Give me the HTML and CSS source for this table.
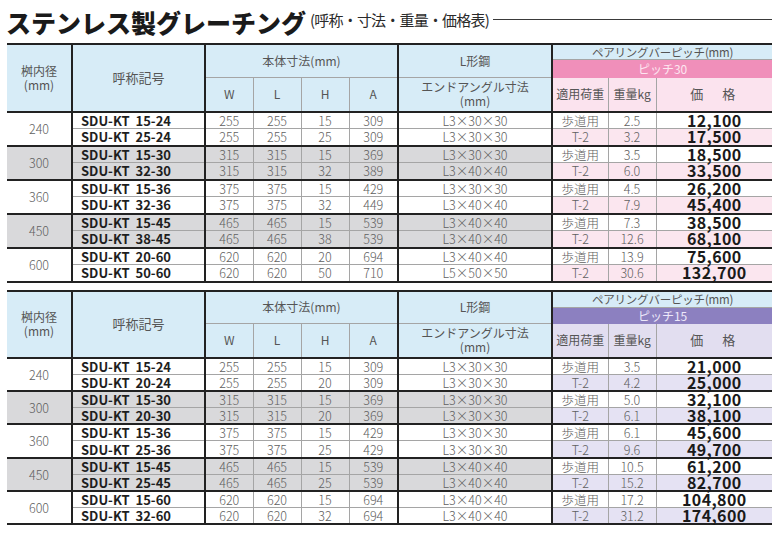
FILE: index.html
```html
<!DOCTYPE html>
<html lang="ja">
<head>
<meta charset="utf-8">
<link rel="stylesheet" href="styles.css">
</head>
<body>
<div class="page">
  <div class="title-row">
    <h1 class="title">ステンレス製グレーチング</h1>
    <span class="subtitle">(呼称・寸法・重量・価格表)</span>
    <span class="rule"></span>
  </div>

  <table class="tbl pink">
    <colgroup>
      <col class="w-c1"><col class="w-c2"><col class="w-d"><col class="w-d"><col class="w-d"><col class="w-a"><col class="w-l"><col class="w-ld"><col class="w-wt"><col class="w-pr">
    </colgroup>
    <thead>
      <tr class="h1">
        <th rowspan="3" class="hd thickr">桝内径<br>(mm)</th>
        <th rowspan="3" class="hd thickr name-h">呼称記号</th>
        <th rowspan="2" colspan="4" class="hd thickr">本体寸法(mm)</th>
        <th rowspan="2" class="hd thickr">L形鋼</th>
        <th colspan="3" class="hd pitch-h">ペアリングバーピッチ(mm)</th>
      </tr>
      <tr class="h2">
        <th colspan="3" class="band">ピッチ30</th>
      </tr>
      <tr class="h3">
        <th class="hd">W</th><th class="hd">L</th><th class="hd">H</th><th class="hd thickr">A</th>
        <th class="hd thickr">エンドアングル寸法<br>(mm)</th>
        <th class="sub">適用荷重</th><th class="sub">重量kg</th><th class="sub price-h">価　格</th>
      </tr>
    </thead>
    <tbody>
      <tr class="gtop"><td rowspan="2" class="thickr">240</td><td class="name thickr">SDU-KT&nbsp; 15-24</td><td>255</td><td>255</td><td>15</td><td class="thickr">309</td><td class="thickr">L3×30×30</td><td>歩道用</td><td>2.5</td><td class="price">12,100</td></tr>
      <tr class="t2"><td class="name thickr">SDU-KT&nbsp; 25-24</td><td>255</td><td>255</td><td>25</td><td class="thickr">309</td><td class="thickr">L3×30×30</td><td class="tint">T-2</td><td class="tint">3.2</td><td class="tint price">17,500</td></tr>
      <tr class="gtop gray"><td rowspan="2" class="thickr">300</td><td class="name thickr">SDU-KT&nbsp; 15-30</td><td>315</td><td>315</td><td>15</td><td class="thickr">369</td><td class="thickr">L3×30×30</td><td class="w">歩道用</td><td class="w">3.5</td><td class="w price">18,500</td></tr>
      <tr class="t2 gray"><td class="name thickr">SDU-KT&nbsp; 32-30</td><td>315</td><td>315</td><td>32</td><td class="thickr">389</td><td class="thickr">L3×40×40</td><td class="tint">T-2</td><td class="tint">6.0</td><td class="tint price">33,500</td></tr>
      <tr class="gtop"><td rowspan="2" class="thickr">360</td><td class="name thickr">SDU-KT&nbsp; 15-36</td><td>375</td><td>375</td><td>15</td><td class="thickr">429</td><td class="thickr">L3×30×30</td><td>歩道用</td><td>4.5</td><td class="price">26,200</td></tr>
      <tr class="t2"><td class="name thickr">SDU-KT&nbsp; 32-36</td><td>375</td><td>375</td><td>32</td><td class="thickr">449</td><td class="thickr">L3×40×40</td><td class="tint">T-2</td><td class="tint">7.9</td><td class="tint price">45,400</td></tr>
      <tr class="gtop gray"><td rowspan="2" class="thickr">450</td><td class="name thickr">SDU-KT&nbsp; 15-45</td><td>465</td><td>465</td><td>15</td><td class="thickr">539</td><td class="thickr">L3×40×40</td><td class="w">歩道用</td><td class="w">7.3</td><td class="w price">38,500</td></tr>
      <tr class="t2 gray"><td class="name thickr">SDU-KT&nbsp; 38-45</td><td>465</td><td>465</td><td>38</td><td class="thickr">539</td><td class="thickr">L3×40×40</td><td class="tint">T-2</td><td class="tint">12.6</td><td class="tint price">68,100</td></tr>
      <tr class="gtop"><td rowspan="2" class="thickr">600</td><td class="name thickr">SDU-KT&nbsp; 20-60</td><td>620</td><td>620</td><td>20</td><td class="thickr">694</td><td class="thickr">L3×40×40</td><td>歩道用</td><td>13.9</td><td class="price">75,600</td></tr>
      <tr class="t2 last"><td class="name thickr">SDU-KT&nbsp; 50-60</td><td>620</td><td>620</td><td>50</td><td class="thickr">710</td><td class="thickr">L5×50×50</td><td class="tint">T-2</td><td class="tint">30.6</td><td class="tint price">132,700</td></tr>
    </tbody>
  </table>

  <table class="tbl purple">
    <colgroup>
      <col class="w-c1"><col class="w-c2"><col class="w-d"><col class="w-d"><col class="w-d"><col class="w-a"><col class="w-l"><col class="w-ld"><col class="w-wt"><col class="w-pr">
    </colgroup>
    <thead>
      <tr class="h1">
        <th rowspan="3" class="hd thickr">桝内径<br>(mm)</th>
        <th rowspan="3" class="hd thickr name-h">呼称記号</th>
        <th rowspan="2" colspan="4" class="hd thickr">本体寸法(mm)</th>
        <th rowspan="2" class="hd thickr">L形鋼</th>
        <th colspan="3" class="hd pitch-h">ペアリングバーピッチ(mm)</th>
      </tr>
      <tr class="h2">
        <th colspan="3" class="band">ピッチ15</th>
      </tr>
      <tr class="h3">
        <th class="hd">W</th><th class="hd">L</th><th class="hd">H</th><th class="hd thickr">A</th>
        <th class="hd thickr">エンドアングル寸法<br>(mm)</th>
        <th class="sub">適用荷重</th><th class="sub">重量kg</th><th class="sub price-h">価　格</th>
      </tr>
    </thead>
    <tbody>
      <tr class="gtop"><td rowspan="2" class="thickr">240</td><td class="name thickr">SDU-KT&nbsp; 15-24</td><td>255</td><td>255</td><td>15</td><td class="thickr">309</td><td class="thickr">L3×30×30</td><td>歩道用</td><td>3.5</td><td class="price">21,000</td></tr>
      <tr class="t2"><td class="name thickr">SDU-KT&nbsp; 20-24</td><td>255</td><td>255</td><td>20</td><td class="thickr">309</td><td class="thickr">L3×30×30</td><td class="tint">T-2</td><td class="tint">4.2</td><td class="tint price">25,000</td></tr>
      <tr class="gtop gray"><td rowspan="2" class="thickr">300</td><td class="name thickr">SDU-KT&nbsp; 15-30</td><td>315</td><td>315</td><td>15</td><td class="thickr">369</td><td class="thickr">L3×30×30</td><td class="w">歩道用</td><td class="w">5.0</td><td class="w price">32,100</td></tr>
      <tr class="t2 gray"><td class="name thickr">SDU-KT&nbsp; 20-30</td><td>315</td><td>315</td><td>20</td><td class="thickr">369</td><td class="thickr">L3×30×30</td><td class="tint">T-2</td><td class="tint">6.1</td><td class="tint price">38,100</td></tr>
      <tr class="gtop"><td rowspan="2" class="thickr">360</td><td class="name thickr">SDU-KT&nbsp; 15-36</td><td>375</td><td>375</td><td>15</td><td class="thickr">429</td><td class="thickr">L3×30×30</td><td>歩道用</td><td>6.1</td><td class="price">45,600</td></tr>
      <tr class="t2"><td class="name thickr">SDU-KT&nbsp; 25-36</td><td>375</td><td>375</td><td>25</td><td class="thickr">429</td><td class="thickr">L3×30×30</td><td class="tint">T-2</td><td class="tint">9.6</td><td class="tint price">49,700</td></tr>
      <tr class="gtop gray"><td rowspan="2" class="thickr">450</td><td class="name thickr">SDU-KT&nbsp; 15-45</td><td>465</td><td>465</td><td>15</td><td class="thickr">539</td><td class="thickr">L3×40×40</td><td class="w">歩道用</td><td class="w">10.5</td><td class="w price">61,200</td></tr>
      <tr class="t2 gray"><td class="name thickr">SDU-KT&nbsp; 25-45</td><td>465</td><td>465</td><td>25</td><td class="thickr">539</td><td class="thickr">L3×40×40</td><td class="tint">T-2</td><td class="tint">15.2</td><td class="tint price">82,700</td></tr>
      <tr class="gtop"><td rowspan="2" class="thickr">600</td><td class="name thickr">SDU-KT&nbsp; 15-60</td><td>620</td><td>620</td><td>15</td><td class="thickr">694</td><td class="thickr">L3×40×40</td><td>歩道用</td><td>17.2</td><td class="price">104,800</td></tr>
      <tr class="t2 last"><td class="name thickr">SDU-KT&nbsp; 32-60</td><td>620</td><td>620</td><td>32</td><td class="thickr">694</td><td class="thickr">L3×40×40</td><td class="tint">T-2</td><td class="tint">31.2</td><td class="tint price">174,600</td></tr>
    </tbody>
  </table>
</div>
</body>
</html>
```

FILE: styles.css
```css
html, body {
  margin: 0;
  padding: 0;
  background: #ffffff;
}

body {
  font-family: "Noto Sans CJK JP", "Noto Sans", sans-serif;
  color: #555555;
}

.page {
  padding: 0 0 0 7px;
  width: 765px;
}

.title-row {
  height: 43px;
  display: flex;
  align-items: center;
  gap: 4px;
}

.title {
  margin: 0 0 0 -1px;
  font-size: 25px;
  font-weight: 900;
  color: #1a1a1a;
  letter-spacing: 0;
  line-height: 1;
  padding-top: 2px;
}

.subtitle {
  font-size: 15px;
  color: #2a2a2a;
  line-height: 1;
  margin-top: -4px;
  letter-spacing: -0.8px;
}

.rule {
  flex: 1;
  height: 1px;
  background: #3a3a3a;
  margin-top: -4px;
}

.tbl {
  border-collapse: collapse;
  table-layout: fixed;
  width: 765px;
  border-top: 2px solid #222;
  border-bottom: 2px solid #222;
}

.tbl + .tbl {
  margin-top: 7px;
}

.w-c1 { width: 65px; }
.w-c2 { width: 133px; }
.w-d { width: 48px; }
.w-a { width: 49px; }
.w-l { width: 154px; }
.w-ld { width: 56px; }
.w-wt { width: 48px; }
.w-pr { width: 116px; }

.tbl th,
.tbl td {
  padding: 0;
  text-align: center;
  vertical-align: middle;
  border: 1px solid #a5a5a5;
  font-weight: 400;
  white-space: nowrap;
}

.tbl tr > :first-child {
  border-left: none;
}

.tbl tr > :last-child {
  border-right: none;
}

.tbl th {
  font-size: 12px;
  line-height: 14px;
  color: #555;
}

.tbl th.pitch-h {
  font-size: 11.5px;
  letter-spacing: -0.2px;
}

.tbl .thickr {
  border-right: 2px solid #222;
}

.tbl thead tr.h3 th {
  border-bottom: 2px solid #222;
}

.tbl thead th[rowspan="3"] {
  border-bottom: 2px solid #222;
}

.hd {
  background: #d7ecf7;
}

.name-h {
  font-size: 13px !important;
}

.pink .h1 { height: 15px; }
.pink .h2 { height: 18px; }
.pink .h3 { height: 34px; }
.purple .h1 { height: 17px; }
.purple .h2 { height: 16px; }
.purple .h3 { height: 34px; }

.band {
  border-left: none !important;
}

.pink .band {
  background: #f08fba;
  border-bottom-color: #f08fba !important;
  color: #fde6f0;
}

.purple .band {
  background: #8c80c0;
  border-bottom-color: #8c80c0 !important;
  color: #ece8fa;
}

.tbl .h1 th:last-child {
  border-bottom: 1px solid #a5a5a5;
}

.pink .sub { background: #fbe3ee; }
.purple .sub { background: #e2def0; }

.sub {
  font-size: 12px;
}

.price-h {
  letter-spacing: 3px;
  font-size: 13px !important;
}

.tbl td {
  height: 15.5px;
  font-size: 12.5px;
  line-height: 15px;
  color: #606060;
  font-weight: 300;
}

.purple td {
  height: 15.2px;
}

.tbl tr.gtop td {
  border-top: 2px solid #222;
}

.tbl tbody tr:first-child td {
  border-top: 2px solid #222;
}

.tbl tr.gray td {
  background: #d9d9db;
}

.tbl tr.gray td.w {
  background: #ffffff;
}

.pink td.tint,
.pink tr.gray td.tint {
  background: #fbe6ef;
}

.purple td.tint,
.purple tr.gray td.tint {
  background: #e5e2f3;
}

.tbl td.name {
  text-align: left;
  padding-left: 8px;
  font-weight: 700;
  font-size: 13px;
  color: #1e1e1e;
}

.tbl td.price {
  font-weight: 700;
  font-size: 16px;
  line-height: 15px;
  color: #1a1a1a;
  letter-spacing: 0.4px;
}
```
